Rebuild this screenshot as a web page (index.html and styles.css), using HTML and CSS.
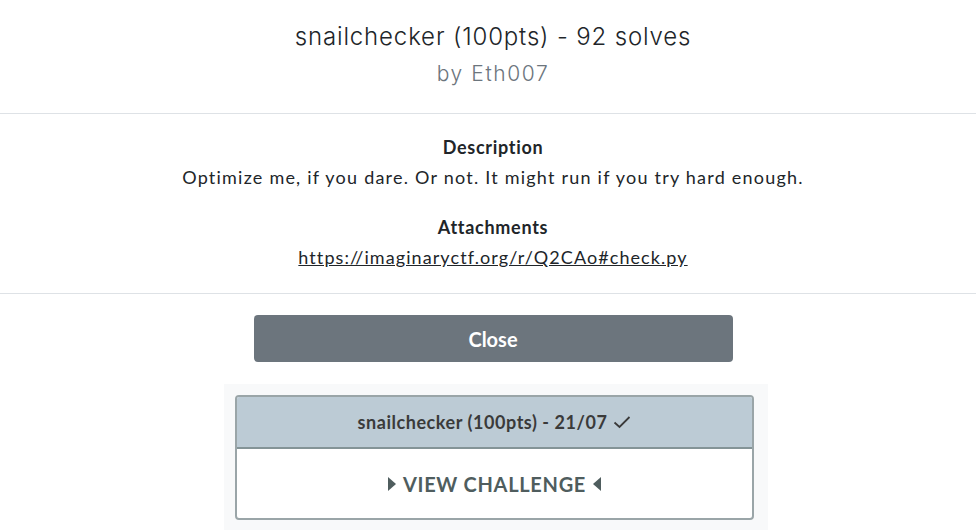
FILE: index.html
```html
<!DOCTYPE html>
<html>
<head>
<meta charset="utf-8">
<link rel="stylesheet" href="styles.css">
</head>
<body>
<div class="modal">
  <header class="modal-header">
    <h1 class="title">snailchecker (100pts) - 92 solves</h1>
    <div class="author">by Eth007</div>
  </header>
  <section class="modal-body">
    <h2 class="label">Description</h2>
    <p class="desc">Optimize me, if you dare. Or not. It might run if you try hard enough.</p>
    <h2 class="label label-gap">Attachments</h2>
    <a class="link" href="#">https://imaginaryctf.org/r/Q2CAo#check.py</a>
  </section>
  <footer class="modal-footer">
    <button class="close-btn">Close</button>
  </footer>
</div>
<div class="list-wrap">
  <div class="list">
    <div class="card">
      <div class="card-header">snailchecker (100pts) - 21/07 <svg class="check" width="18" height="14" viewBox="0 0 18 14"><path d="M1.5 7.5 L6.5 12 L16.5 2" fill="none" stroke="#3a3a3a" stroke-width="1.8"/></svg></div>
      <div class="card-body">
        <svg class="tri" width="8" height="14" viewBox="0 0 8 14"><path d="M0 0 L8 7 L0 14 Z" fill="#4f5d5e"/></svg>
        <span>VIEW CHALLENGE</span>
        <svg class="tri" width="8" height="14" viewBox="0 0 8 14"><path d="M8 0 L0 7 L8 14 Z" fill="#4f5d5e"/></svg>
      </div>
    </div>
  </div>
</div>
</body>
</html>
```
FILE: styles.css
```css
html, body {
  margin: 0;
  padding: 0;
  background: #ffffff;
}
body {
  font-family: "Lato", "Open Sans", sans-serif;
  color: #212529;
  overflow: hidden;
}
.modal-header {
  padding: 19px 0 24px 10px;
  border-bottom: 1px solid #dee2e6;
  text-align: center;
}
.title {
  margin: 0;
  font-family: "Inter", "Open Sans", sans-serif;
  font-weight: 300;
  font-size: 24px;
  line-height: 36px;
  letter-spacing: 0.85px;
  color: #212529;
}
.author {
  margin-top: 4px;
  font-family: "Inter", "Open Sans", sans-serif;
  font-weight: 300;
  font-size: 21px;
  line-height: 30px;
  letter-spacing: 1.6px;
  color: #6c757d;
}
.modal-body {
  padding: 20px 0 22px 10px;
  border-bottom: 1px solid #dee2e6;
  text-align: center;
  display: flex;
  flex-direction: column;
  align-items: center;
}
.label {
  margin: 0;
  font-size: 18px;
  font-weight: 700;
  line-height: 27px;
  letter-spacing: 0.7px;
}
.label-gap {
  margin-top: 23px;
}
.desc {
  margin: 3px 0 0;
  font-size: 18px;
  line-height: 27px;
  letter-spacing: 1.22px;
}
.link {
  margin-top: 3px;
  font-size: 18px;
  line-height: 27px;
  color: #212529;
  text-decoration: underline;
  letter-spacing: 1.08px;
}
.modal-footer {
  padding: 21px 0 0 10px;
  display: flex;
  justify-content: center;
}
.close-btn {
  width: 479px;
  height: 47px;
  border: none;
  border-radius: 4px;
  background: #6c757d;
  color: #ffffff;
  font-family: "Lato", sans-serif;
  font-size: 20px;
  font-weight: 700;
}
.list-wrap {
  display: flex;
  justify-content: center;
  padding: 22px 0 0 16px;
}
.list {
  width: 519px;
  padding: 11px 14px 11px 11px;
  background: #f8f9fa;
}
.card {
  border: 2px solid #9aa5a8;
  border-radius: 4px;
  background: #ffffff;
  overflow: hidden;
}
.card-header {
  height: 50px;
  background: #bccbd5;
  border-bottom: 2px solid #849497;
  display: flex;
  align-items: center;
  justify-content: center;
  gap: 6px;
  font-size: 18px;
  font-weight: 700;
  letter-spacing: 0.55px;
  color: #3a3a3a;
}
.card-body {
  height: 69px;
  display: flex;
  align-items: center;
  justify-content: center;
  gap: 7px;
  font-size: 20px;
  font-weight: 700;
  color: #4f5d5e;
  letter-spacing: 0.7px;
}
```
